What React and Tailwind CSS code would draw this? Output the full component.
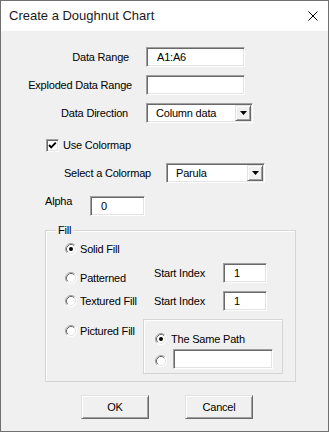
import React from 'react';

const sunken =
  'border border-t-[#a0a0a0] border-l-[#a0a0a0] border-b-white border-r-white shadow-[inset_1px_1px_0_#696969,inset_-1px_-1px_0_#e3e3e3] bg-white';
const raised =
  'border border-t-[#e3e3e3] border-l-[#e3e3e3] border-b-[#696969] border-r-[#696969] shadow-[inset_1px_1px_0_#ffffff,inset_-1px_-1px_0_#a0a0a0] bg-[#f0f0f0]';
const etched = 'border border-[#d5d5d5] shadow-[inset_1px_1px_0_#ffffff]';

function Radio({ checked = false }) {
  return (
    <svg width="12" height="12" viewBox="0 0 12 12" className="shrink-0">
      <circle cx="6" cy="6" r="5.5" fill="#ffffff" />
      <path d="M2.11 9.89 A5.5 5.5 0 0 1 9.89 2.11" fill="none" stroke="#a0a0a0" />
      <path d="M2.82 9.18 A4.5 4.5 0 0 1 9.18 2.82" fill="none" stroke="#696969" />
      <path d="M9.89 2.11 A5.5 5.5 0 0 1 2.11 9.89" fill="none" stroke="#ffffff" />
      <path d="M9.18 2.82 A4.5 4.5 0 0 1 2.82 9.18" fill="none" stroke="#e3e3e3" />
      {checked && <circle cx="6" cy="6" r="2" fill="#000000" />}
    </svg>
  );
}

function Checkbox() {
  return (
    <div className={`w-[13px] h-[13px] shrink-0 ${sunken} relative`}>
      <svg width="11" height="11" viewBox="0 0 11 11" className="absolute left-0 top-0">
        <path d="M2 5 L4.2 7.4 L8.8 2.6" fill="none" stroke="#000" strokeWidth="1.9" />
      </svg>
    </div>
  );
}

function TextBox({ value = '', className = '' }) {
  return (
    <div className={`h-[20px] flex items-center ${sunken} ${className}`}>
      <span className="pl-[10px] leading-none">{value}</span>
    </div>
  );
}

function Combo({ value, className = '' }) {
  return (
    <div className={`h-[20px] flex items-center ${sunken} ${className} pr-[1px]`}>
      <span className="flex-1 pl-[9px] leading-none">{value}</span>
      <div className={`w-[16px] h-[16px] flex items-center justify-center ${raised}`}>
        <svg width="7" height="4" viewBox="0 0 7 4">
          <path d="M0 0 H7 L3.5 4 Z" fill="#000" />
        </svg>
      </div>
    </div>
  );
}

export default function App() {
  return (
    <div className="w-[329px] h-[433px] bg-white">
      <div className="w-[329px] h-[432px] border border-[#707070] bg-[#f0f0f0] flex flex-col text-[11px] tracking-[-0.2px] text-black font-['Liberation_Sans',Arial,sans-serif]">
        {/* Title bar */}
        <div className="h-[30px] bg-white flex items-center justify-between pl-[8px] pr-[10px]">
          <span className="text-[13px] tracking-normal text-[#1a1a1a]">Create a Doughnut Chart</span>
          <svg width="10" height="10" viewBox="0 0 10 10">
            <path d="M0.5 0.5 L9.5 9.5 M9.5 0.5 L0.5 9.5" stroke="#000" strokeWidth="1" />
          </svg>
        </div>

        {/* Body */}
        <div className="flex flex-col pt-[16px]">
          <div className="flex items-center h-[20px]">
            <div className="w-[145px] text-right pr-[17px]">Data Range</div>
            <TextBox value="A1:A6" className="w-[99px]" />
          </div>
          <div className="flex items-center h-[20px] mt-[8px]">
            <div className="w-[145px] text-right pr-[14px]">Exploded Data Range</div>
            <TextBox className="w-[99px]" />
          </div>
          <div className="flex items-center h-[20px] mt-[8px]">
            <div className="w-[145px] text-right pr-[18px]">Data Direction</div>
            <Combo value="Column data" className="w-[107px]" />
          </div>

          <div className="flex items-center h-[13px] mt-[16px] pl-[45px]">
            <Checkbox />
            <span className="ml-[4px]">Use Colormap</span>
          </div>

          <div className="flex items-center h-[20px] mt-[11px]">
            <div className="w-[165px] text-right pr-[15px]">Select a Colormap</div>
            <Combo value="Parula" className="w-[99px]" />
          </div>

          <div className="flex items-start h-[20px] mt-[13px] pl-[44px]">
            <div className="w-[45px] leading-[13px] -mt-[1px]">Alpha</div>
            <TextBox value="0" className="w-[55px]" />
          </div>

          {/* Fill group */}
          <div className={`relative ml-[44px] mt-[14px] w-[251px] h-[152px] ${etched} flex flex-col pl-[19px]`}>
            <span className="absolute left-[10px] -top-[7px] px-[2px] bg-[#f0f0f0] leading-[13px]">Fill</span>

            <div className="flex items-center h-[12px] mt-[12px]">
              <Radio checked />
              <span className="ml-[3px]">Solid Fill</span>
            </div>

            <div className="flex items-start h-[20px] mt-[8px]">
              <div className="w-[89px] flex items-center mt-[7px]">
                <Radio />
                <span className="ml-[3px]">Patterned</span>
              </div>
              <div className="w-[69px] h-[20px] flex items-center">Start Index</div>
              <TextBox value="1" className="w-[44px]" />
            </div>

            <div className="flex items-center h-[20px] mt-[8px]">
              <div className="w-[89px] flex items-center">
                <Radio />
                <span className="ml-[3px]">Textured Fill</span>
              </div>
              <div className="w-[69px] flex items-center">Start Index</div>
              <TextBox value="1" className="w-[44px]" />
            </div>

            <div className="flex items-start mt-[8px]">
              <div className="w-[78px] flex items-center mt-[4px]">
                <Radio />
                <span className="ml-[3px]">Pictured Fill</span>
              </div>
              <div className={`w-[140px] h-[55px] ${etched} flex flex-col pl-[11px]`}>
                <div className="flex items-center h-[12px] mt-[13px]">
                  <Radio checked />
                  <span className="ml-[4px]">The Same Path</span>
                </div>
                <div className="flex items-center h-[20px] mt-[4px]">
                  <div className="mt-[4px]">
                    <Radio />
                  </div>
                  <TextBox className="w-[100px] ml-[6px]" />
                </div>
              </div>
            </div>
          </div>

          {/* Buttons */}
          <div className="flex mt-[13px] pl-[80px] gap-[36px]">
            <button className={`w-[68px] h-[24px] ${raised} text-[11px]`}>OK</button>
            <button className={`w-[68px] h-[24px] ${raised} text-[11px]`}>Cancel</button>
          </div>
        </div>
      </div>
    </div>
  );
}
